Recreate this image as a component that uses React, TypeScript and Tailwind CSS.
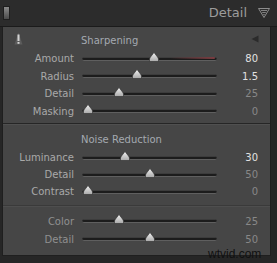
import React from "react";

type Row = {
  label: string;
  value: string;
  pct: number;
  bright?: boolean;
  dim?: boolean;
  red?: boolean;
};

const sharpening: Row[] = [
  { label: "Amount", value: "80", pct: 0.533, bright: true, red: true },
  { label: "Radius", value: "1.5", pct: 0.4, bright: true },
  { label: "Detail", value: "25", pct: 0.25 },
  { label: "Masking", value: "0", pct: 0 },
];

const noise: Row[] = [
  { label: "Luminance", value: "30", pct: 0.3, bright: true },
  { label: "Detail", value: "50", pct: 0.5 },
  { label: "Contrast", value: "0", pct: 0 },
];

const color: Row[] = [
  { label: "Color", value: "25", pct: 0.25, dim: true },
  { label: "Detail", value: "50", pct: 0.5, dim: true },
];

function Thumb({ pct }: { pct: number }) {
  // thumb centre travels between 6px and 129px of the 135px track
  const left = 6 + 123 * pct - 5;
  return (
    <svg
      width="10"
      height="10"
      viewBox="0 0 10 10"
      className="absolute top-[-5px]"
      style={{ left }}
    >
      <defs>
        <linearGradient id="thumbfill" x1="0" y1="0" x2="0" y2="1">
          <stop offset="0" stopColor="#f2f2f2" />
          <stop offset="1" stopColor="#a8a8a8" />
        </linearGradient>
      </defs>
      <path
        d="M5 0.5 L8.5 5 Q9.5 6.2 9.5 7.5 L9.5 9.5 L0.5 9.5 L0.5 7.5 Q0.5 6.2 1.5 5 Z"
        fill="url(#thumbfill)"
        stroke="#2a2a2a"
        strokeWidth="0.6"
      />
    </svg>
  );
}

function SliderRow({ row, h }: { row: Row; h: string }) {
  const labelColor = row.dim ? "text-[#909090]" : "text-[#a9a9a9]";
  const valueColor = row.bright ? "text-[#e2e2e2]" : "text-[#888888]";
  return (
    <div className={`flex items-center ${h}`}>
      <div className={`w-[71px] text-right ${labelColor}`}>{row.label}</div>
      <div className="relative ml-[8px] w-[135px] h-[4px]">
        <div className="h-[4px] rounded-full bg-[#1c1c1c] border-t border-[#3c3c3c] border-b border-b-[#5f5f5f]" />
        {row.red && (
          <div className="absolute right-[2px] top-0 h-[2px] w-[45px] rounded-full bg-gradient-to-r from-transparent to-[#7a3c40]" />
        )}
        <Thumb pct={row.pct} />
      </div>
      <div className={`w-[41px] text-right ${valueColor}`}>{row.value}</div>
    </div>
  );
}

export default function App() {
  return (
    <div
      className="relative w-[277px] h-[263px] bg-[#262626] text-[10px] overflow-hidden"
      style={{ fontFamily: '"DejaVu Sans", "Liberation Sans", sans-serif' }}
    >
      {/* header */}
      <div className="flex items-center h-[27px] bg-[#2c2c2c] border-b border-[#1b1b1b] pl-[3px] pr-[7px]">
        <div className="w-[7px] h-[14px] border border-[#1e1e1e] bg-gradient-to-b from-[#8a8a8a] via-[#6a6a6a] to-[#4a4a4a]" />
        <div className="flex-1" />
        <span className="text-[13px] text-[#9c9c9c] mr-[11px]">Detail</span>
        <svg width="12" height="10" viewBox="0 0 12 10">
          <path d="M0.5 0.5 H11.5 L6 9.5 Z" fill="none" stroke="#8c8c8c" strokeWidth="1" />
          <path d="M3 2.5 H9 M4.2 4.5 H7.8 M5.3 6.5 H6.7" stroke="#8c8c8c" strokeWidth="0.9" />
        </svg>
      </div>

      {/* panel */}
      <div className="ml-[2px] w-[269px] h-[229px] bg-[#464646] border-l border-r border-[#1f1f1f] border-b">
        {/* sharpening */}
        <div className="pt-[3px] pb-[3px]">
          <div className="relative flex items-center h-[20px]">
            <svg width="9" height="13" viewBox="0 0 9 13" className="absolute left-[11px] top-[2px]">
              <path d="M4.5 0.5 L8.5 12.5 H0.5 Z" fill="#5c5c5c" />
              <rect x="3.5" y="2.5" width="2" height="6.5" fill="#d2d2d2" />
              <rect x="3.5" y="10" width="2" height="1.8" fill="#d2d2d2" />
            </svg>
            <span className="ml-[78px] text-[#a4a9b0]">Sharpening</span>
            <svg width="8" height="8" viewBox="0 0 8 8" className="absolute left-[248px] top-[5px]">
              <path d="M7.5 0.5 V7.5 L0.5 4 Z" fill="#2b2b2b" />
            </svg>
          </div>
          {sharpening.map((r) => (
            <SliderRow key={r.label} row={r} h="h-[17.5px]" />
          ))}
        </div>
        <div className="h-px bg-[#262626]" />
        <div className="h-px bg-[#505050]" />

        {/* noise reduction */}
        <div className="pt-[4px] pb-[5px]">
          <div className="flex items-center h-[20px]">
            <span className="ml-[78px] text-[#a4a9b0]">Noise Reduction</span>
          </div>
          {noise.map((r) => (
            <SliderRow key={r.label} row={r} h="h-[17px]" />
          ))}
        </div>
        <div className="h-px bg-[#3a3a3a]" />
        <div className="h-px bg-[#4e4e4e]" />

        {/* color */}
        <div className="pt-[5px]">
          {color.map((r) => (
            <SliderRow key={r.label} row={r} h="h-[18px]" />
          ))}
        </div>
      </div>

      <span
        className="absolute left-[208px] top-[248px] text-[12px] leading-[12px] text-[#111111]"
        style={{ fontFamily: '"Liberation Sans", Arial, sans-serif' }}
      >
        wtvid.com
      </span>
    </div>
  );
}
